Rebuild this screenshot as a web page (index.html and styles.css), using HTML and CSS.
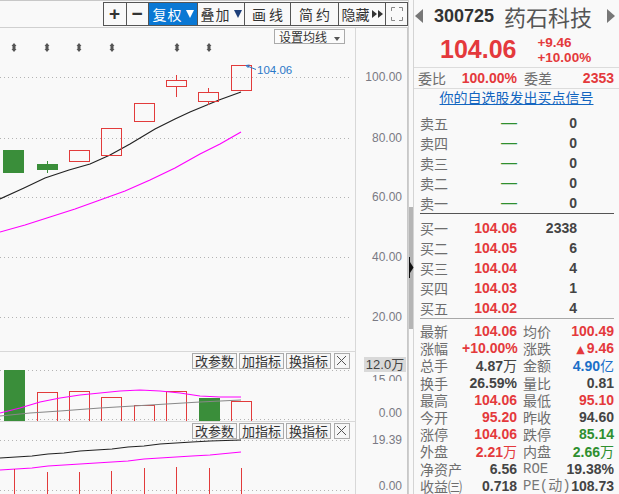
FILE: index.html
```html
<!DOCTYPE html>
<html lang="zh-CN">

<head>
    <meta charset="UTF-8">
    <meta name="viewport" content="width=device-width, initial-scale=1.0">
    <title>药石科技 300725</title>
    <link rel="stylesheet" href="styles.css">
</head>

<body>
    <div class="app">
        <!-- 左侧 K 线区 -->
        <div class="chart">
            <div class="toolbar">
                <div class="tools">
                    <span class="tool t-plus">+</span>
                    <span class="tool t-minus">−</span>
                    <span class="tool t-fq on">复权<i class="tri"></i></span>
                    <span class="tool t-dj">叠加<i class="tri"></i></span>
                    <span class="tool t-hx">画线</span>
                    <span class="tool t-jy">简约</span>
                    <span class="tool t-yc">隐藏<i class="ff"></i><i class="ff"></i></span>
                    <span class="tool t-fs">
                        <svg width="12" height="14" viewBox="0 0 12 14" fill="none" stroke="#888" stroke-width="1">
                            <path d="M0.5 4V0.5H4M8 0.5H11.5V4M11.5 10V13.5H8M4 13.5H0.5V10" />
                        </svg>
                    </span>
                </div>
            </div>

            <div class="pane main">
                <div class="plot">
                    <svg width="355" height="323">
                        <defs>
                            <path id="mk" d="M0 0L2.5 3H1.5V6H2.5L0 9L-2.5 6H-1.5V3H-2.5Z" />
                        </defs>
                        <g class="grid">
                            <line x1="0" y1="49.5" x2="352" y2="49.5" />
                            <line x1="0" y1="110.5" x2="352" y2="110.5" />
                            <line x1="0" y1="169.5" x2="352" y2="169.5" />
                            <line x1="0" y1="229.5" x2="352" y2="229.5" />
                            <line x1="0" y1="289.5" x2="352" y2="289.5" />
                        </g>
                        <g fill="#555">
                            <use href="#mk" x="14" y="15" />
                            <use href="#mk" x="47" y="15" />
                            <use href="#mk" x="79" y="15" />
                            <use href="#mk" x="112" y="15" />
                            <use href="#mk" x="177" y="15" />
                            <use href="#mk" x="209" y="15" />
                        </g>
                        <polyline class="ma-k" points="0,171 24,160 45,150 69,142 90,136 110,127 130,116 155,101 175,91 190,84 219,72 241,64" />
                        <polyline class="ma-m" points="0,204 25,197 50,189 75,181 100,172 125,163 150,152 175,140 200,126 220,116 241,104" />
                        <g class="down">
                            <rect x="3.5" y="122.5" width="20" height="22" />
                            <line x1="47.5" y1="133" x2="47.5" y2="145" />
                            <rect x="37.5" y="136.5" width="20" height="5" />
                        </g>
                        <g class="up">
                            <rect x="69.5" y="122.5" width="20" height="11" />
                            <rect x="101.5" y="100.5" width="20" height="27" />
                            <rect x="134.5" y="75.5" width="20" height="18" />
                            <line x1="176.5" y1="47" x2="176.5" y2="52" />
                            <line x1="176.5" y1="59" x2="176.5" y2="69" />
                            <rect x="166.5" y="52.5" width="20" height="6" />
                            <line x1="208.5" y1="60" x2="208.5" y2="64" />
                            <line x1="208.5" y1="74" x2="208.5" y2="77" />
                            <rect x="198.5" y="64.5" width="20" height="9" />
                            <rect x="231.5" y="37.5" width="20" height="25" />
                        </g>
                        <g class="tag">
                            <path d="M246 37.5L256 41.5M246 37.5L249.5 37M246 37.5L248.5 40" />
                            <text x="257" y="46">104.06</text>
                        </g>
                    </svg>
                    <span class="ma-btn">设置均线<i class="tri sm"></i></span>
                </div>
                <div class="axis">
                    <span style="top:49px">100.00</span>
                    <span style="top:110px">80.00</span>
                    <span style="top:169px">60.00</span>
                    <span style="top:229px">40.00</span>
                    <span style="top:289px">20.00</span>
                </div>
            </div>

            <div class="pane vol">
                <div class="plot">
                    <svg width="355" height="69">
                        <g class="grid">
                            <line x1="0" y1="18.5" x2="352" y2="18.5" />
                            <line x1="0" y1="67.5" x2="352" y2="67.5" />
                        </g>
                        <g class="down">
                            <rect x="4.5" y="18.5" width="20" height="51" />
                            <rect x="199.5" y="46.5" width="20" height="23" />
                        </g>
                        <g class="up">
                            <rect x="37.5" y="40.5" width="20" height="29" />
                            <rect x="69.5" y="39.5" width="20" height="30" />
                            <rect x="101.5" y="45.5" width="20" height="24" />
                            <rect x="134.5" y="53.5" width="20" height="16" />
                            <rect x="166.5" y="39.5" width="20" height="30" />
                            <rect x="231.5" y="49.5" width="20" height="20" />
                        </g>
                        <polyline class="ma-m" points="0,61 20,56 40,50 60,46 80,43 100,41 120,39 140,38 160,39 180,41 200,44 220,45 241,45" />
                        <polyline class="ma-g" points="0,64 30,61 60,59 100,56 150,53 200,50 241,48" />
                    </svg>
                    <div class="ind-tools">
                        <span class="ibtn">改参数</span>
                        <span class="ibtn">加指标</span>
                        <span class="ibtn">换指标</span>
                        <span class="ibtn x">
                            <svg width="11" height="11" stroke="#555"><path d="M1 1L10 10M10 1L1 10" /></svg>
                        </span>
                    </div>
                </div>
                <div class="axis">
                    <span class="under" style="top:23px">15.00</span>
                    <span style="top:61px">0.00</span>
                    <b class="cur">12.0万</b>
                </div>
            </div>

            <div class="pane ind">
                <div class="plot">
                    <svg width="355" height="72">
                        <g class="grid">
                            <line x1="0" y1="18.5" x2="352" y2="18.5" />
                            <line x1="0" y1="68.5" x2="352" y2="68.5" />
                        </g>
                        <polyline class="ma-k" points="0,36 16,35 32,34 48,32 64,31 80,29 96,28 112,27 128,25 144,24 160,22 176,21 192,20 210,19 241,18" />
                        <polyline class="ma-m" points="0,48 16,47 32,46 48,44 64,43 80,42 96,41 112,40 128,39 144,37 160,36 176,35 192,34 210,33 241,30" />
                        <g class="bar">
                            <line x1="14.5" y1="47" x2="14.5" y2="72" />
                            <line x1="47.5" y1="50" x2="47.5" y2="72" />
                            <line x1="79.5" y1="50" x2="79.5" y2="72" />
                            <line x1="111.5" y1="49" x2="111.5" y2="72" />
                            <line x1="144.5" y1="46" x2="144.5" y2="72" />
                            <line x1="176.5" y1="45" x2="176.5" y2="72" />
                            <line x1="209.5" y1="46" x2="209.5" y2="72" />
                            <line x1="241.5" y1="46" x2="241.5" y2="72" />
                        </g>
                    </svg>
                    <div class="ind-tools">
                        <span class="ibtn">改参数</span>
                        <span class="ibtn">加指标</span>
                        <span class="ibtn">换指标</span>
                        <span class="ibtn x">
                            <svg width="11" height="11" stroke="#555"><path d="M1 1L10 10M10 1L1 10" /></svg>
                        </span>
                    </div>
                </div>
                <div class="axis">
                    <span style="top:18px">19.39</span>
                    <span style="top:64px">0.00</span>
                </div>
            </div>
        </div>

        <!-- 拖动条 -->
        <div class="splitter">
            <div class="thumb"></div>
            <svg class="grip" width="5" height="21">
                <path d="M0.5 0V21" stroke="#111" />
                <path d="M1 5L4.5 10.5L1 16Z" fill="#111" />
            </svg>
        </div>

        <!-- 右侧报价 -->
        <div class="quote">
            <div class="q-head">
                <svg class="q-arr" width="8" height="14"><path d="M8 0V14L0 7Z" /></svg>
                <span class="q-code">300725</span>
                <span class="q-name">药石科技</span>
                <svg class="q-arr r" width="8" height="14"><path d="M0 0V14L8 7Z" /></svg>
            </div>
            <div class="q-price">
                <span class="q-last">104.06</span>
                <div class="q-chg">
                    <span>+9.46</span>
                    <span>+10.00%</span>
                </div>
            </div>
            <div class="q-ratio">
                <span class="lbl">委比</span>
                <span class="num up">100.00%</span>
                <span class="lbl l2">委差</span>
                <span class="num up">2353</span>
            </div>
            <div class="q-link"><a href="#">你的自选股发出买点信号</a></div>

            <div class="book sell">
                <div class="row"><span class="lbl">卖五</span><span class="dash">—</span><span class="num">0</span></div>
                <div class="row"><span class="lbl">卖四</span><span class="dash">—</span><span class="num">0</span></div>
                <div class="row"><span class="lbl">卖三</span><span class="dash">—</span><span class="num">0</span></div>
                <div class="row"><span class="lbl">卖二</span><span class="dash">—</span><span class="num">0</span></div>
                <div class="row"><span class="lbl">卖一</span><span class="dash">—</span><span class="num">0</span></div>
            </div>
            <div class="book buy">
                <div class="row"><span class="lbl">买一</span><span class="num up">104.06</span><span class="num">2338</span></div>
                <div class="row"><span class="lbl">买二</span><span class="num up">104.05</span><span class="num">6</span></div>
                <div class="row"><span class="lbl">买三</span><span class="num up">104.04</span><span class="num">4</span></div>
                <div class="row"><span class="lbl">买四</span><span class="num up">104.03</span><span class="num">1</span></div>
                <div class="row"><span class="lbl">买五</span><span class="num up">104.02</span><span class="num">4</span></div>
            </div>

            <div class="stats">
                <span class="lbl">最新</span><span class="num up">104.06</span>
                <span class="lbl l2">均价</span><span class="num up">100.49</span>

                <span class="lbl">涨幅</span><span class="num up">+10.00%</span>
                <span class="lbl l2">涨跌</span><span class="num up"><i class="arrow">▲</i>9.46</span>

                <span class="lbl">总手</span><span class="num">4.87<i class="unit">万</i></span>
                <span class="lbl l2">金额</span><span class="num blue">4.90<i class="unit">亿</i></span>

                <span class="lbl">换手</span><span class="num">26.59%</span>
                <span class="lbl l2">量比</span><span class="num">0.81</span>

                <span class="lbl">最高</span><span class="num up">104.06</span>
                <span class="lbl l2">最低</span><span class="num up">95.10</span>

                <span class="lbl">今开</span><span class="num up">95.20</span>
                <span class="lbl l2">昨收</span><span class="num">94.60</span>

                <span class="lbl">涨停</span><span class="num up">104.06</span>
                <span class="lbl l2">跌停</span><span class="num down">85.14</span>

                <span class="lbl">外盘</span><span class="num up">2.21<i class="unit">万</i></span>
                <span class="lbl l2">内盘</span><span class="num down">2.66<i class="unit">万</i></span>

                <span class="lbl">净资产</span><span class="num">6.56</span>
                <span class="lbl l2 mono">ROE</span><span class="num">19.38%</span>

                <span class="lbl">收益㈢</span><span class="num">0.718</span>
                <span class="lbl l2 mono">PE(动)</span><span class="num">108.73</span>
            </div>
        </div>
    </div>
</body>

</html>
```

FILE: styles.css
```css
* {
    margin: 0;
    padding: 0;
    box-sizing: border-box;
}

body {
    width: 619px;
    height: 494px;
    overflow: hidden;
    background-color: #f9f9f9;
    font-family: "Liberation Sans", "Noto Sans CJK SC", sans-serif;
    color: #444;
}

i {
    font-style: normal;
}

.app {
    display: flex;
    height: 494px;
}

/* ---------- chart ---------- */

.chart {
    width: 408px;
    display: flex;
    flex-direction: column;
    border-top: 1px solid #c8c8c8;
}

.toolbar {
    height: 27px;
    border-bottom: 1px solid #d0d0d0;
    display: flex;
    justify-content: flex-end;
}

.tools {
    display: flex;
    height: 24px;
    margin-top: 1px;
    border: 1px solid #555;
    border-left: 0;
}

.tool {
    display: flex;
    align-items: center;
    justify-content: center;
    border-left: 1px solid #555;
    font-family: "Noto Sans CJK SC", sans-serif;
    font-size: 14px;
    line-height: 22px;
    color: #333;
    letter-spacing: 1px;
}

.t-plus { width: 23px; font-family: "Liberation Sans", sans-serif; font-size: 19px; font-weight: bold; }
.t-minus { width: 22px; font-family: "Liberation Sans", sans-serif; font-size: 19px; font-weight: bold; }
.t-fq { width: 49px; }
.t-dj { width: 47px; }
.t-hx { width: 46px; letter-spacing: 3px; padding-left: 3px; }
.t-jy { width: 48px; letter-spacing: 3px; padding-left: 3px; }
.t-yc { width: 47px; letter-spacing: 0; }
.t-fs { width: 22px; }

.tool.on {
    background-color: #0a78d4;
    color: #fff;
}

.tri {
    display: inline-block;
    width: 0;
    height: 0;
    margin-left: 3px;
    border-left: 4px solid transparent;
    border-right: 4px solid transparent;
    border-top: 8px solid #1e3f7a;
}

.on .tri {
    border-top-color: #fff;
}

.tri.sm {
    margin-left: 7px;
    border-left-width: 3px;
    border-right-width: 3px;
    border-top: 4px solid #555;
    vertical-align: middle;
}

.ff {
    display: inline-block;
    width: 0;
    height: 0;
    border-top: 4px solid transparent;
    border-bottom: 4px solid transparent;
    border-left: 5px solid #333;
}

.ff:first-of-type {
    margin-left: 2px;
    margin-right: 1px;
}

.pane {
    display: flex;
}

.pane.main {
    height: 324px;
}

.pane.vol {
    height: 70px;
}

.pane.ind {
    flex: 1;
}

.plot {
    position: relative;
    width: 356px;
    border-right: 1px solid #d8d8d8;
    border-bottom: 1px solid #d8d8d8;
}

.pane.ind .plot {
    border-bottom: 0;
}

.plot svg {
    display: block;
}

.axis {
    position: relative;
    width: 52px;
    border-right: 1px solid #c8c8c8;
    font-size: 12px;
    color: #7a7a84;
}

.axis span {
    position: absolute;
    right: 5px;
    transform: translateY(-50%);
    line-height: 14px;
}

.axis .under {
    line-height: 10px;
    height: 6px;
    overflow: hidden;
    transform: none;
}

.axis .cur {
    position: absolute;
    left: 8px;
    top: 5px;
    width: 42px;
    height: 15px;
    background-color: #d9d9d9;
    font-weight: normal;
    font-size: 13px;
    line-height: 15px;
    color: #444;
    text-align: center;
}

.grid line {
    stroke: #b4b4b4;
    stroke-dasharray: 1 3;
}

.ma-k {
    fill: none;
    stroke: #222;
    stroke-width: 1.2;
}

.ma-m {
    fill: none;
    stroke: #ff00ff;
    stroke-width: 1.2;
}

.ma-g {
    fill: none;
    stroke: #888;
    stroke-width: 1.2;
}

.down rect {
    fill: #3a8e3a;
    stroke: #3a8e3a;
}

.down line {
    stroke: #3a8e3a;
}

.up rect {
    fill: none;
    stroke: #e23b3b;
}

.up line,
.bar line {
    stroke: #e23b3b;
}

.tag path {
    fill: none;
    stroke: #2a78c8;
}

.tag text {
    font-family: "Liberation Sans", sans-serif;
    font-size: 11.5px;
    fill: #2a78c8;
}

.ma-btn {
    position: absolute;
    left: 274px;
    top: 1px;
    width: 71px;
    height: 15px;
    border: 1px solid #aaa;
    background-color: #fbfbfb;
    font-family: "Noto Sans CJK SC", sans-serif;
    font-size: 12px;
    line-height: 13px;
    color: #333;
    text-align: center;
}

.ind-tools {
    position: absolute;
    top: 1px;
    right: 5px;
    display: flex;
    gap: 2px;
}

.ibtn {
    height: 16px;
    padding: 0 2px;
    border: 1px solid #aaa;
    background-color: #f6f6f6;
    font-family: "Noto Sans CJK SC", sans-serif;
    font-size: 13px;
    line-height: 14px;
    color: #333;
}

.ibtn.x {
    width: 16px;
    padding: 1px 0 0 1px;
    margin-left: 1px;
}

.ibtn.x svg {
    display: block;
}

/* ---------- splitter ---------- */

.splitter {
    position: relative;
    width: 5px;
    border-left: 1px solid #cfcfcf;
}

.thumb {
    height: 122px;
    margin-top: 207px;
    background-color: #b5b5b5;
}

.grip {
    position: absolute;
    left: 0;
    top: 257px;
}

/* ---------- quote ---------- */

.quote {
    width: 206px;
    border-left: 1px solid #d4d4d4;
    font-size: 14px;
}

.lbl {
    font-family: "Noto Sans CJK SC", sans-serif;
    font-size: 14px;
    line-height: 16px;
    color: #6e6e6e;
    white-space: nowrap;
}

.num {
    font-weight: bold;
    font-size: 14px;
    line-height: 16px;
    text-align: right;
    color: #444;
    white-space: nowrap;
}

.up {
    color: #e4393c;
}

.down {
    color: #2f8f2f;
}

.blue {
    color: #1b6fc8;
}

.unit {
    font-family: "Noto Sans CJK SC", sans-serif;
    font-weight: normal;
    font-size: 14px;
    line-height: 14px;
}

.q-head {
    display: flex;
    align-items: center;
    height: 32px;
}

.q-arr {
    fill: #777;
    margin-left: 1px;
}

.q-arr.r {
    margin-left: auto;
    margin-right: 4px;
}

.q-code {
    margin-left: 11px;
    font-size: 18px;
    font-weight: bold;
    color: #333;
}

.q-name {
    margin-left: 10px;
    font-family: "Noto Sans CJK SC", sans-serif;
    font-size: 22px;
    line-height: 28px;
    color: #555;
}

.q-price {
    display: flex;
    align-items: center;
    height: 36px;
    padding-left: 26px;
    border-bottom: 1px solid #dcdcdc;
}

.q-last {
    font-size: 25px;
    font-weight: bold;
    color: #e4393c;
}

.q-chg {
    display: flex;
    flex-direction: column;
    margin-left: 21px;
    font-size: 13.5px;
    font-weight: bold;
    line-height: 15px;
    color: #e4393c;
}

.q-ratio {
    display: grid;
    grid-template-columns: 42px 57px 45px 1fr;
    align-items: center;
    height: 21px;
    padding: 0 5px 0 4px;
    border-bottom: 1px solid #dcdcdc;
}

.q-ratio .l2 {
    padding-left: 7px;
}

.q-link {
    height: 17px;
    text-align: center;
    line-height: 16px;
}

.q-link a {
    font-family: "Noto Sans CJK SC", sans-serif;
    font-size: 14px;
    color: #1466c0;
    text-decoration: underline;
}

.book {
    margin: 0 5px 0 6px;
}

.book.sell {
    padding-top: 7px;
    border-bottom: 1px solid #555;
}

.book.buy {
    padding-top: 4px;
    border-bottom: 1px solid #a8a8a8;
}

.row {
    display: grid;
    grid-template-columns: 50px 47px 60px;
    align-items: center;
    height: 20px;
}

.dash {
    font-family: "Liberation Sans", sans-serif;
    font-size: 16px;
    line-height: 16px;
    text-align: right;
    color: #2f8f2f;
}

.stats {
    display: grid;
    grid-template-columns: 42px 55px 46px 1fr;
    grid-auto-rows: 17.2px;
    align-items: center;
    margin: 0 5px 0 6px;
    padding-top: 4px;
}

.stats .lbl,
.stats .num {
    line-height: 15px;
}

.stats .l2 {
    padding-left: 6px;
}

.stats .mono {
    font-family: "Liberation Mono", "Noto Sans CJK SC", monospace;
    font-size: 14px;
    color: #777;
}

.arrow {
    font-family: "DejaVu Sans", sans-serif;
    font-size: 11px;
    margin-right: 2px;
}
```
